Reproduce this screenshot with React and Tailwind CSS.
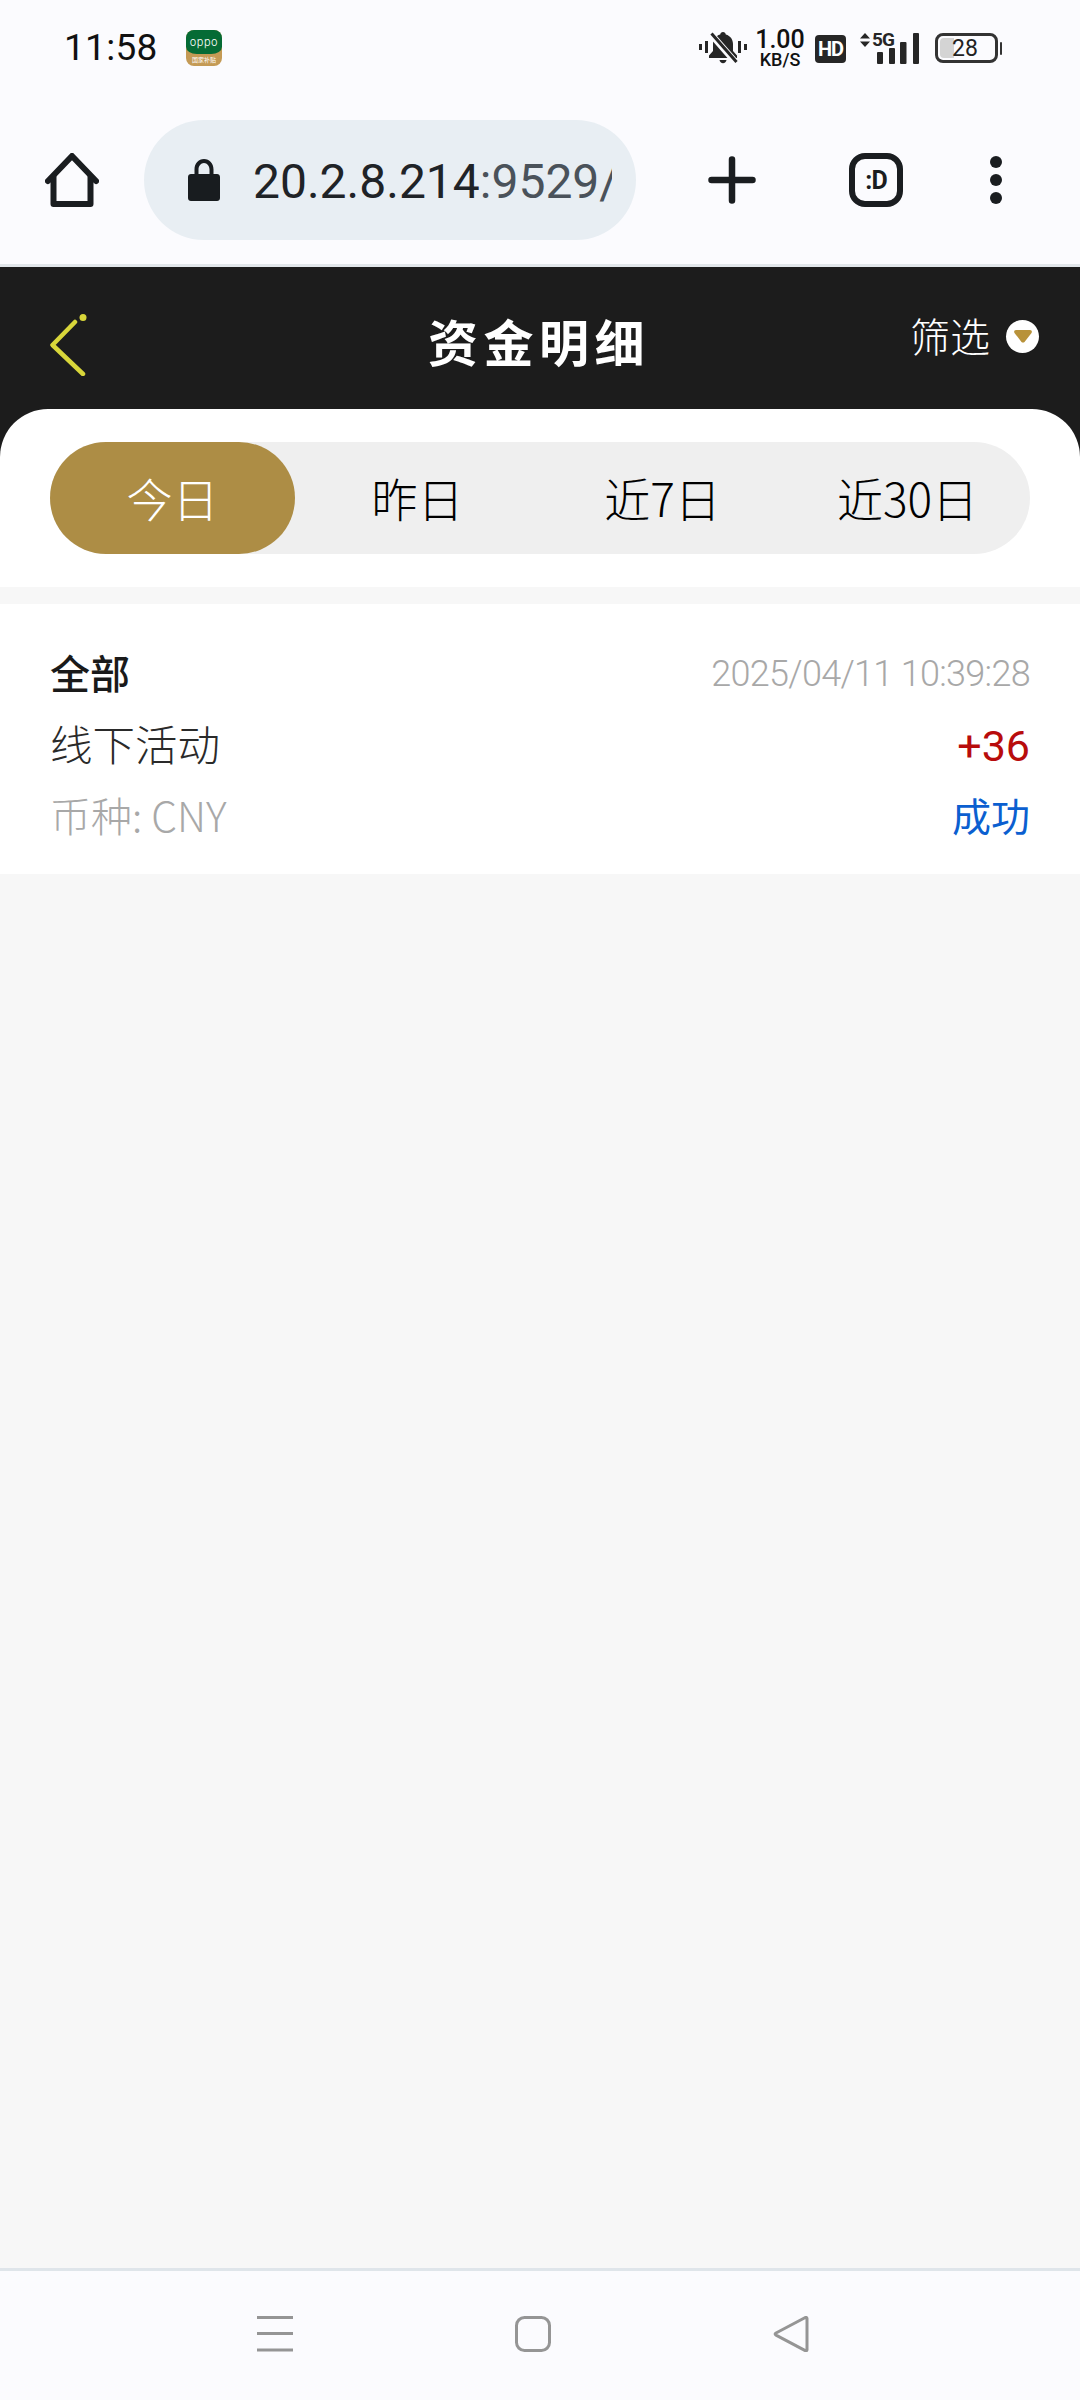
import React from "react";

const CJK = "font-['Noto_Sans_CJK_SC','Noto_Sans',sans-serif]";

function MutedBell() {
  return (
    <svg width="48" height="33" viewBox="0 0 48 33" fill="none">
      <path d="M24 1c1.600 0 2.600 1 2.800 2.400C31.500 4.600 34 8.600 34 13v7l4 4.500V27H10v-2.500l4-4.500v-7c0-4.400 2.500-8.400 7.200-9.600C21.400 2 22.400 1 24 1z" fill="#262626" />
      <path d="M20.500 29h7c-.3 2-1.700 3.200-3.500 3.200s-3.200-1.200-3.500-3.200z" fill="#262626" />
      <path d="M11 2l27 31" stroke="#fbfbfe" strokeWidth="6.500" />
      <path d="M12.500 2.500l25 28.500" stroke="#262626" strokeWidth="3" />
      <path d="M1.500 13v6M46.500 13v6" stroke="#262626" strokeWidth="3" />
      <path d="M7.500 10v12M40.500 10v12" stroke="#262626" strokeWidth="3" />
    </svg>
  );
}

function SignalBars() {
  return (
    <svg width="42" height="31" viewBox="0 0 42 31" fill="#262626">
      <rect x="0" y="19" width="6" height="12" rx="1" />
      <rect x="12" y="15" width="6" height="16" rx="1" />
      <rect x="23" y="9" width="6.500" height="22" rx="1" />
      <rect x="36" y="0" width="6" height="31" rx="1" />
    </svg>
  );
}

function StatusBar() {
  return (
    <div className="flex h-[120px] items-start pt-[30px] pr-[78px] pl-[64px]">
      <span className="w-[93px] font-['Roboto',sans-serif] text-[37px] leading-[36px] tracking-[0.3px] text-[#111]">11:58</span>
      {/* shopping app notification badge */}
      <div className="ml-[29px] flex h-[36px] w-[36px] flex-col overflow-hidden rounded-[8px] bg-[#c49a55]">
        <div className="flex h-[24px] items-center justify-center rounded-b-[30%] bg-[#056b35] font-['Inter',sans-serif] text-[11px] leading-none font-light tracking-[0.5px] text-white">
          oppo
        </div>
        <div className={`${CJK} flex flex-1 items-center justify-center text-[6px] leading-none whitespace-nowrap text-white`}>国家补贴</div>
      </div>
      <div className="flex-1" />
      <div className="flex items-start">
        <div className="mt-px"><MutedBell /></div>
        <div className="ml-[10px] flex w-[46px] flex-col items-center font-['Roboto',sans-serif] text-[#111]">
          <span className="text-[25px] leading-[20px] font-medium">1.00</span>
          <span className="mt-[1px] text-[18px] leading-[17px] font-medium">KB/S</span>
        </div>
        <div className="mt-[5px] ml-[12px] flex h-[28px] w-[31px] items-center justify-center rounded-[4px] bg-[#262626] font-['Roboto',sans-serif] text-[20px] leading-none font-bold tracking-[-1px] text-white">
          HD
        </div>
        <div className="relative mt-[3px] ml-[14px] h-[31px] w-[59px]">
          <svg className="absolute top-0 left-0" width="10" height="14" viewBox="0 0 10 14" fill="#262626">
            <path d="M5 0l5 5.500H0zM5 14L0 8.500h10z" />
          </svg>
          <span className="absolute top-[-3px] left-[12px] font-['Roboto',sans-serif] text-[19px] leading-[20px] font-bold tracking-[-1px] text-[#262626]">5G</span>
          <div className="absolute top-0 left-[17px]"><SignalBars /></div>
        </div>
        <div className="relative mt-[3px] ml-[16px] flex items-center">
          <div className="relative flex h-[30px] w-[63px] items-center rounded-[8px] border-[3px] border-[#333] p-[2px]">
            <div className="h-[20px] w-[14px] rounded-l-[4px] bg-[#d4d4d4]" />
            <span className="absolute top-[1px] left-[14px] font-['Roboto',sans-serif] text-[23px] leading-[24px] text-[#222]">28</span>
          </div>
          <div className="ml-[2px] h-[13px] w-[2px] rounded-full bg-[#333]" />
        </div>
      </div>
    </div>
  );
}

function BrowserBar() {
  return (
    <div className="flex h-[147px] items-start border-b-[3px] border-[#e1e6ea]">
      <svg className="mt-[33px] ml-[45px]" width="54" height="54" viewBox="0 0 54 54" fill="none" stroke="#1a1d20" strokeWidth="6" strokeLinejoin="round" strokeLinecap="round">
        <path d="M3 28L27 3l24 25" />
        <path d="M8.500 24v27h37V24" />
      </svg>
      <div className="ml-[45px] flex h-[120px] w-[492px] items-center rounded-full bg-[#e8eef3] pr-[24px] pl-[44px]">
        <svg className="shrink-0" width="32" height="42" viewBox="0 0 32 42" fill="#181c1f">
          <path d="M3 15h3.500v-4.500C6.500 4.500 10.500 0 16 0s9.500 4.500 9.500 10.500V15H29c1.700 0 3 1.300 3 3v21c0 1.700-1.300 3-3 3H3c-1.700 0-3-1.300-3-3V18c0-1.700 1.300-3 3-3zM10.500 15h11v-4.500C21.500 7 19.200 4 16 4s-5.500 3-5.500 6.500z" />
        </svg>
        <div className="mt-[4px] ml-[33px] w-[359px] overflow-hidden font-['Roboto',sans-serif] text-[48px] leading-[56px] whitespace-nowrap">
          <span className="text-[#1f2327]">20.2.8.214</span>
          <span className="text-[#4a525a]">:9529/</span>
        </div>
      </div>
      <svg className="mt-[36px] ml-[72px]" width="48" height="48" viewBox="0 0 48 48" fill="none" stroke="#1a1d20" strokeWidth="6.500" strokeLinecap="round">
        <path d="M3.500 24h41M24 3.500v41" />
      </svg>
      <div className="mt-[33px] ml-[93px] flex h-[54px] w-[54px] items-center justify-center rounded-[16px] border-[6px] border-[#1a1d20] font-['Roboto',sans-serif] text-[25px] leading-none font-bold tracking-[-1px] text-[#1a1d20]">
        :D
      </div>
      <div className="mt-[36px] ml-[87px] flex flex-col gap-[6px]">
        <div className="h-[12px] w-[12px] rounded-full bg-[#1a1d20]" />
        <div className="h-[12px] w-[12px] rounded-full bg-[#1a1d20]" />
        <div className="h-[12px] w-[12px] rounded-full bg-[#1a1d20]" />
      </div>
    </div>
  );
}

function PageHeader() {
  return (
    <div className={`${CJK} relative flex h-[190px] items-start bg-[#1c1c1c]`}>
      <svg className="mt-[47px] ml-[50px]" width="38" height="62" viewBox="0 0 38 62" fill="none" stroke="#d8d63a" strokeWidth="4.500" strokeLinecap="round" strokeLinejoin="round">
        <path d="M25 8L2.500 31 33 60" />
        <circle cx="33" cy="3.500" r="3.500" fill="#d8d63a" stroke="none" />
      </svg>
      <h1 className="absolute top-[43px] left-[428px] text-[50px] leading-[60px] font-semibold tracking-[5.500px] whitespace-nowrap text-white">资金明细</h1>
      <span className="absolute top-[43px] left-[910px] text-[40px] leading-[50px] font-light text-white">筛选</span>
      <div className="absolute top-[53px] left-[1006px] flex h-[33px] w-[33px] items-center justify-center rounded-full bg-white">
        <svg width="18" height="13" viewBox="0 0 18 13" fill="#b8923a">
          <path d="M2 0h14c1.600 0 2.400 1.600 1.500 2.900l-7 9c-.7.900-2.300.900-3 0l-7-9C-.4 1.600.4 0 2 0z" />
        </svg>
      </div>
    </div>
  );
}

function RangeTabs() {
  const tabs = ["今日", "昨日", "近7日", "近30日"];
  return (
    <div className="relative mt-[-48px] rounded-t-[48px] bg-white px-[50px] pt-[33px] pb-[33px]">
      <div className={`${CJK} grid h-[112px] grid-cols-4 rounded-full bg-[#efefef] text-[46px] leading-none font-light text-black`}>
        {tabs.map((tab, i) => (
          <div
            key={tab}
            className={i === 0 ? "flex items-center justify-center rounded-full bg-[#ad8d45] pb-[3px] text-white" : "flex items-center justify-center pb-[3px]"}
          >
            {tab}
          </div>
        ))}
      </div>
    </div>
  );
}

function RecordCard() {
  return (
    <div className={`${CJK} mt-[17px] flex h-[270px] flex-col bg-white px-[50px] pt-[33px]`}>
      <div className="flex h-[70px] items-center justify-between">
        <span className="text-[40px] leading-none font-medium text-[#1a1a1a]">全部</span>
        <span className="mt-[4px] font-['Roboto',sans-serif] text-[36px] leading-none font-light tracking-[-0.7px] text-[#a8a8a8]">2025/04/11 10:39:28</span>
      </div>
      <div className="flex h-[72px] items-center justify-between">
        <span className="text-[42.500px] leading-none font-light text-[#2a2a2a]">线下活动</span>
        <span className="mt-[6px] font-['Roboto',sans-serif] text-[43px] leading-none font-normal text-[#b80c0c]">+36</span>
      </div>
      <div className="flex h-[70px] items-center justify-between">
        <span className="text-[41px] leading-none font-light text-[#a8a8a8]">币种: CNY</span>
        <span className="text-[39px] leading-none text-[#0b5fd0]">成功</span>
      </div>
    </div>
  );
}

function NavBar() {
  return (
    <div className="relative flex h-[132px] items-start border-t-[3px] border-[#dfe5ea] bg-[#fbfbfe] pt-[45px]">
      <svg className="ml-[257px]" width="36" height="36" viewBox="0 0 36 36" fill="#959595">
        <rect x="0" y="0" width="36" height="3" />
        <rect x="0" y="16" width="36" height="3" />
        <rect x="0" y="32.500" width="36" height="3" />
      </svg>
      <svg className="ml-[222px]" width="36" height="36" viewBox="0 0 36 36" fill="none" stroke="#959595" strokeWidth="3">
        <rect x="1.500" y="1.500" width="33" height="33" rx="8" />
      </svg>
      <svg className="ml-[222px]" width="36" height="36" viewBox="0 0 36 36" fill="none" stroke="#959595" strokeWidth="3" strokeLinejoin="round">
        <path d="M34 2.500C34 1.500 33.200 1 32.300 1.500L3 17c-1.200.700-1.200 1.500 0 2.200l29.300 15.500c.9.500 1.700 0 1.700-1z" />
      </svg>
    </div>
  );
}

export default function App() {
  return (
    <div className="flex h-[2400px] w-[1080px] flex-col overflow-hidden bg-[#fbfbfe]">
      <StatusBar />
      <BrowserBar />
      <main className="flex flex-1 flex-col bg-[#f7f7f7]">
        <PageHeader />
        <RangeTabs />
        <RecordCard />
      </main>
      <NavBar />
    </div>
  );
}
